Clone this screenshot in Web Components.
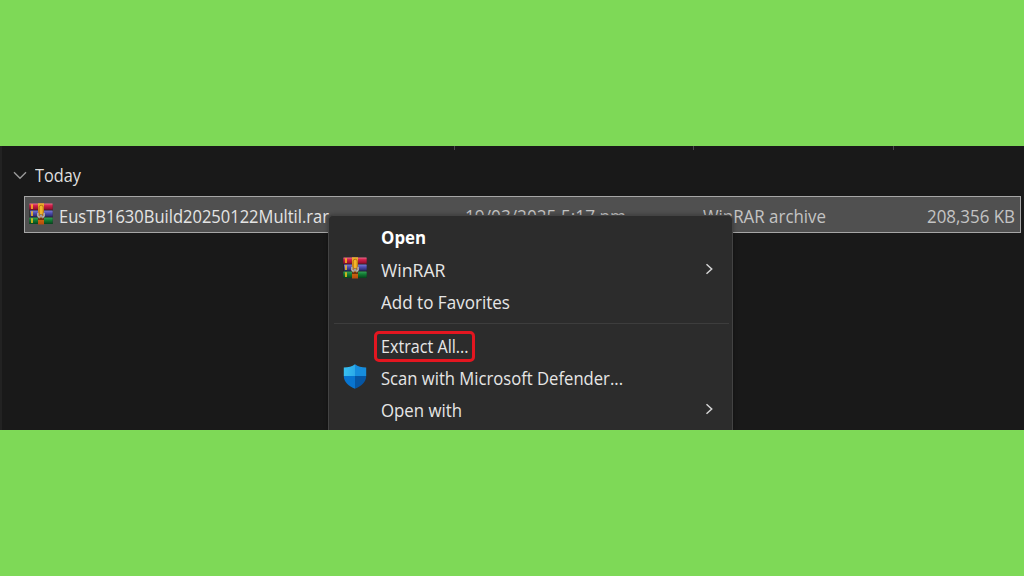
<!DOCTYPE html>
<html lang="en">
<head>
<meta charset="utf-8">
<title>Explorer</title>
<style>
html,body{margin:0;height:100%;overflow:hidden;background:#7ed957}
body{font-family:"Open Sans","Noto Sans",sans-serif;font-size:17.3px}
</style>
</head>
<body>
<explorer-page></explorer-page>
<script>
function define(name, html, ready) {
  customElements.define(name, class extends HTMLElement {
    connectedCallback() {
      if (this.shadowRoot) return;
      const root = this.attachShadow({ mode: "open" });
      root.innerHTML = html;
      if (ready) ready(this, root);
    }
  });
}

// One line of text, scaled horizontally to the width given by w
define("fit-text", `<style>
:host{display:block;flex:none;white-space:nowrap;line-height:24px;height:24px}
span{display:inline-block;transform-origin:0 50%}
</style><span><slot></slot></span>`, (el, root) => {
  const w = parseFloat(el.getAttribute("w"));
  el.style.width = w + "px";
  const s = root.querySelector("span");
  s.style.transform = "scaleX(" + (w / s.getBoundingClientRect().width) + ")";
});

define("rar-icon", `<style>:host{display:block;flex:none;width:24px;height:22px}svg{display:block}</style>
<svg width="24" height="22" viewBox="0 0 24 22">
<defs>
<linearGradient id="r" x2="0" y2="1"><stop offset="0" stop-color="#f06a8c"/><stop offset=".35" stop-color="#cf1f49"/><stop offset="1" stop-color="#8c0d2b"/></linearGradient>
<linearGradient id="b" x2="0" y2="1"><stop offset="0" stop-color="#8280d8"/><stop offset=".4" stop-color="#504fb4"/><stop offset="1" stop-color="#292766"/></linearGradient>
<linearGradient id="g" x2="0" y2="1"><stop offset="0" stop-color="#3aa45c"/><stop offset=".4" stop-color="#138036"/><stop offset="1" stop-color="#06451c"/></linearGradient>
<linearGradient id="o" x2="0" y2="1"><stop offset="0" stop-color="#eab32c"/><stop offset=".5" stop-color="#d98416"/><stop offset="1" stop-color="#b84b0c"/></linearGradient>
</defs>
<rect x=".4" y="1" width="23.2" height="20" fill="#202024"/>
<rect x=".3" y=".5" width="23.4" height="6.2" rx=".5" fill="url(#r)"/>
<rect x="1" y="7.4" width="22.7" height="6.3" rx=".5" fill="url(#b)"/>
<rect x=".3" y="14.4" width="23.4" height="6.5" rx=".5" fill="url(#g)"/>
<path d="M3 1.3V6M3 8.3v4.6M3 15.3V20" stroke="#ffc61c" stroke-width="1.5"/>
<rect x="9" y=".3" width="6" height="21.2" fill="url(#o)"/>
<path d="M9 15h6v2H9z" fill="#70330c"/>
<rect x="10.2" y="2.3" width="4" height="9.6" rx="1.8" fill="#f4b52a" stroke="#9e5b0b" stroke-width=".7"/>
<path d="M8.9 9.8v3.4l1.4 1.2 1.7-2.2 1.7 2.2 1.4-1.2V9.8" fill="none" stroke="#7d7877" stroke-width="1.8"/>
<path d="M8.9 9.8v3.4l1.4 1.1 1.7-1.9 1.7 1.9 1.4-1.1V9.8" fill="none" stroke="#d2cac2" stroke-width=".9"/>
</svg>`);

define("shield-icon", `<style>:host{display:block;flex:none;width:24px;height:25px}svg{display:block}</style>
<svg width="24" height="25" viewBox="0 0 24 25">
<defs><clipPath id="c"><path d="M12 .3C14.8 2.8 18.7 3.5 23.2 3.5V12C23.2 18 18.2 22.3 12 24.7 5.8 22.3.8 18 .8 12V3.5C5.3 3.5 9.2 2.8 12 .3Z"/></clipPath>
<linearGradient id="l"><stop offset="0" stop-color="#39c2f2"/><stop offset="1" stop-color="#2baae8"/></linearGradient></defs>
<g clip-path="url(#c)"><path fill="url(#l)" d="M0 0h12v12H0z"/><path fill="#168ddd" d="M12 0h12v12H12z"/><path fill="#0875d0" d="M0 12h12v13H0z"/><path fill="#0656a4" d="M12 12h12v13H12z"/></g>
</svg>`);

define("group-header", `<style>
:host{display:flex;align-items:center;height:24px;padding-left:12px;color:#dedede}
svg{display:block;width:14px;margin:-1px 7.5px 0 0}
</style>
<svg width="14" height="9" viewBox="0 0 14 9"><path d="M1 1.3l6 6 6-6" fill="none" stroke="#9a9a9a" stroke-width="1.4"/></svg>
<slot></slot>`);

define("file-row", `<style>
:host{display:grid;grid-template-columns:435px 238px 1fr auto;align-items:center;box-sizing:border-box;height:36.5px;margin:8px 3px 0 23.5px;
border:1.3px solid #a6a6a6;background:#505050;color:#c4c4c4;padding:4px 5px 0 5px}
.n{display:flex;align-items:center;color:#e4e4e4}
.n rar-icon{margin:-6px 6px 0 -.5px}
</style>
<div class="n"><rar-icon></rar-icon><fit-text w="270">EusTB1630Build20250122Multil.rar</fit-text></div>
<fit-text w="161">19/03/2025 5:17 pm</fit-text>
<fit-text w="123">WinRAR archive</fit-text>
<fit-text w="88">208,356 KB</fit-text>`);

define("column-ticks", `<style>
:host{display:grid;grid-template-columns:455px 239px 200px 1fr;height:3.5px}
i{border-right:1px solid #4a4a4a}i:last-child{border:0}
</style><i></i><i></i><i></i><i></i>`);

define("menu-item", `<style>
:host{display:flex;align-items:center;height:32.4px;color:#e6e6e6}
:host([bold]){font-weight:700;color:#fff}
.i{width:38.5px;flex:none;display:flex;margin-top:-5px}
.t{flex:1;display:flex}
.m{display:flex;outline:3.2px solid #e31620;outline-offset:0;border-radius:2px;padding:1px 3.5px 0 4px;margin:0 -4px}
svg{display:none;margin:-4px 18px 0 0}
:host([sub]) svg{display:block}
</style>
<div class="i"><slot name="icon"></slot></div><div class="t"><div class="x"><slot></slot></div></div>
<svg width="9" height="12" viewBox="0 0 9 12"><path d="M1.5 1.2L6.7 6l-5.2 4.8" fill="none" stroke="#d5d5d5" stroke-width="1.5"/></svg>`,
(el, root) => { if (el.hasAttribute("marked")) root.querySelector(".x").className = "m"; });

define("context-menu", `<style>
:host{display:block;box-sizing:border-box;width:405px;height:216px;padding:6.5px 0 0 13.5px;background:#2c2c2c;
border:solid #434343;border-width:1px 1.5px 0 1px;border-radius:5px 5px 0 0;box-shadow:0 0 4px #0005}
hr{border:0;height:1px;background:#3d3d3d;margin:3.4px 3px 6.2px -9px}
</style>
<menu-item bold><fit-text w="45">Open</fit-text></menu-item>
<menu-item sub><rar-icon slot="icon"></rar-icon><fit-text w="64.5">WinRAR</fit-text></menu-item>
<menu-item><fit-text w="129">Add to Favorites</fit-text></menu-item>
<hr>
<menu-item marked><fit-text w="87.5">Extract All...</fit-text></menu-item>
<menu-item><shield-icon slot="icon"></shield-icon><fit-text w="242">Scan with Microsoft Defender...</fit-text></menu-item>
<menu-item sub><fit-text w="81">Open with</fit-text></menu-item>`);

define("explorer-page", `<style>
:host{display:flex;flex-direction:column;justify-content:center;height:576px}
main{position:relative;box-sizing:border-box;height:283.5px;background:#191919;overflow:hidden;border-left:2px solid #222}
column-ticks{margin-left:-2px}
group-header{margin-top:14.5px;margin-left:-1px}
file-row{margin-left:21.5px}
context-menu{position:absolute;left:326px;top:68.5px}
</style>
<main><column-ticks></column-ticks>
<group-header><fit-text w="46">Today</fit-text></group-header>
<file-row></file-row>
<context-menu></context-menu></main>`);
</script>
</body>
</html>
